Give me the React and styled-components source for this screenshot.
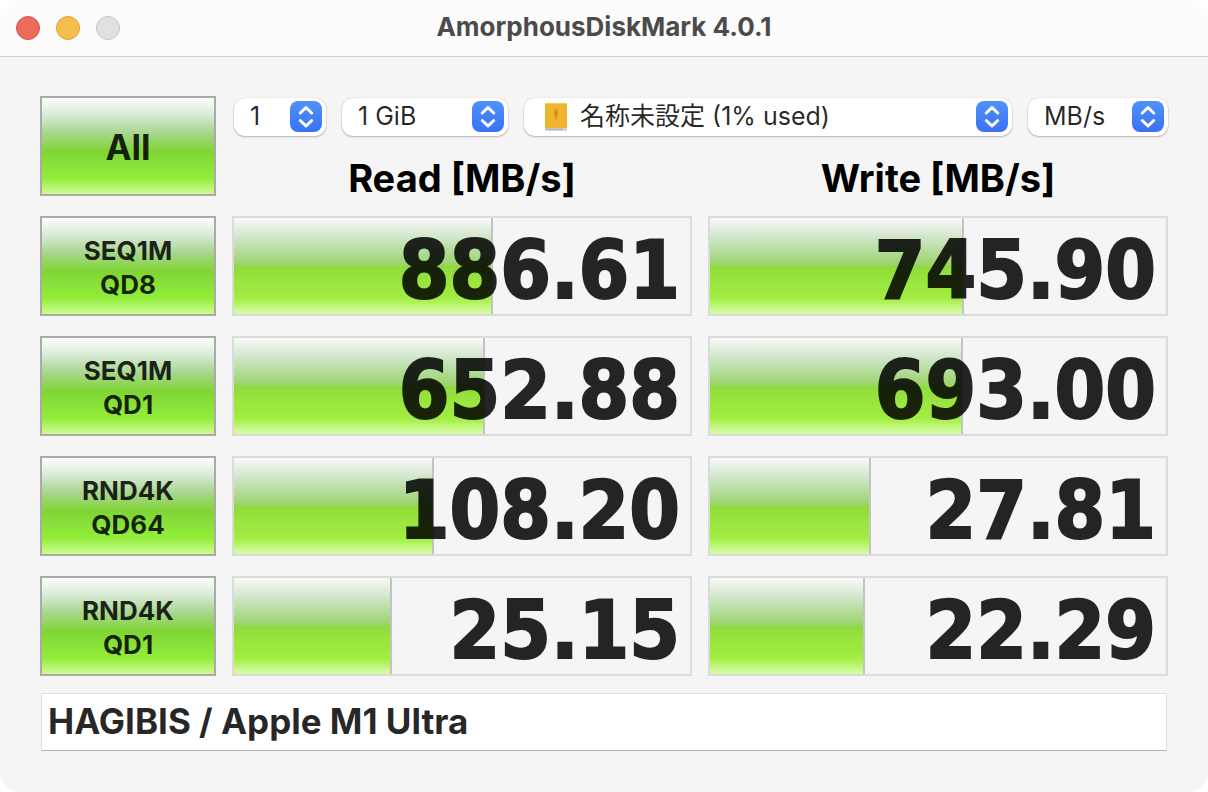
import React from "react";
import styled, { createGlobalStyle } from "styled-components";

const GlobalStyle = createGlobalStyle`
  *, *::before, *::after { box-sizing: border-box; }
  body {
    margin: 0;
    background: #ffffff;
    color: rgba(0, 0, 0, 0.85);
    font-family: Inter, "Noto Sans CJK JP", sans-serif;
  }
  button, input, select { font: inherit; color: inherit; }
`;

const Window = styled.main`
  min-height: 100vh;
  background: #f5f5f5;
  border-radius: 20px;
  overflow: hidden;
`;

const TitleBar = styled.header`
  display: grid;
  grid-template-columns: 1fr auto 1fr;
  align-items: center;
  height: 57px;
  padding: 0 16px;
  background: #fcfcfc;
  border-bottom: 1px solid #cdcdcd;
`;

const WindowControls = styled.div`
  display: flex;
  gap: 16px;
`;

const WindowButton = styled.button`
  width: 24px;
  height: 24px;
  padding: 0;
  border: 1px solid ${(p) => p.$edge};
  border-radius: 50%;
  background: ${(p) => p.$fill};
`;

const Title = styled.h1`
  margin: 0;
  padding-bottom: 2px;
  font-size: 26px;
  line-height: 32px;
  font-weight: 700;
  color: #4b4b4b;
`;

const Content = styled.div`
  padding: 39px 40px 40px;
`;

const Results = styled.table`
  width: 100%;
  table-layout: fixed;
  border-spacing: 0;

  td, th { padding: 0; }
`;

const TestColumn = styled.col`
  width: 176px;
`;

const ToolbarCell = styled.td`
  && { padding: 2px 0 0 18px; }
  height: 44px;
  vertical-align: top;
`;

const Toolbar = styled.div`
  display: flex;
  gap: 16px;
`;

const HeadCell = styled.th`
  && { padding: 20px 0 0 16px; }
  height: 56px;
  vertical-align: top;
  font-size: 38px;
  line-height: 36px;
  font-weight: 700;
  color: #000000;
`;

const TestCell = styled.th`
  && { padding-top: 20px; }
`;

const ResultCell = styled.td`
  && { padding: 20px 0 0 16px; }
`;

const TestButton = styled.button`
  display: block;
  width: 100%;
  height: 100px;
  padding: ${(p) => (p.$large ? "2px" : "4px")} 0 0;
  border: 2px solid #a9aba9;
  border-radius: 0;
  background: linear-gradient(
    #fcfefc 0%, #dcecd9 16%, #a9d690 36%, #7fd533 56%, #8ce63a 74%, #94ee3c 84%, #cdfb96 100%
  );
  font-size: ${(p) => (p.$large ? "35px" : "26px")};
  line-height: 34px;
  font-weight: 700;
  white-space: pre-line;
`;

const Gauge = styled.div`
  display: grid;
  height: 100px;
  border: 2px solid #dadcda;

  > * { grid-area: 1 / 1; }
`;

const GaugeFill = styled.div`
  border-right: 2px solid #c2c4c2;
  background: linear-gradient(
    #f9f9f9 0%, #d5e8cf 18%, #b5dc9c 34%, #9bd368 49%, #8fdb3b 51%, #9be63f 68%, #a2ee42 84%, #d9fdae 100%
  );
`;

const GaugeValue = styled.output`
  justify-self: end;
  align-self: center;
  padding: 8px 10px 0 0;
  font-family: "DejaVu Sans Condensed", "DejaVu Sans", sans-serif;
  font-size: 81px;
  line-height: 88px;
  font-weight: 700;
  color: #000000;
  -webkit-text-stroke: 2px #000000;
  opacity: 0.85;
`;

const Picker = styled.label`
  position: relative;
  display: flex;
  align-items: center;
  height: 38px;
  flex: ${(p) => (p.$width ? `0 0 ${p.$width}` : "1 1 0")};
  min-width: 0;
`;

const PickerSelect = styled.select`
  width: 100%;
  height: 100%;
  padding: 0 44px 2px ${(p) => (p.$hasIcon ? "56px" : "16px")};
  border: 0;
  border-radius: 11px;
  background: #ffffff;
  box-shadow: 0 0 1px rgba(0, 0, 0, 0.25), 0 1px 2px rgba(0, 0, 0, 0.25);
  appearance: none;
  font-size: 25px;
  line-height: 32px;
`;

const PickerArrows = styled.svg`
  position: absolute;
  right: 4px;
  width: 32px;
  height: 32px;
  pointer-events: none;
`;

const DiskIcon = styled.svg`
  position: absolute;
  left: 20px;
  width: 24px;
  height: 28px;
  pointer-events: none;
`;

const NoteField = styled.input`
  display: block;
  width: calc(100% - 2px);
  height: 58px;
  margin: 17px 1px 0;
  padding: 0 6px 2px;
  border: 1px solid #e0e0e0;
  border-bottom-color: #b4b4b4;
  border-radius: 0;
  background: #ffffff;
  font-size: 35px;
  font-weight: 700;
`;

const tests = [
  { name: "SEQ1M\nQD8", read: ["886.61", 56.8], write: ["745.90", 55.8] },
  { name: "SEQ1M\nQD1", read: ["652.88", 55], write: ["693.00", 55.4] },
  { name: "RND4K\nQD64", read: ["108.20", 43.9], write: ["27.81", 35.3] },
  { name: "RND4K\nQD1", read: ["25.15", 34.7], write: ["22.29", 34] },
];

function Dropdown({ label, value, width, icon }) {
  return (
    <Picker $width={width}>
      {icon}
      <PickerSelect aria-label={label} defaultValue={value} $hasIcon={Boolean(icon)}>
        <option>{value}</option>
      </PickerSelect>
      <PickerArrows viewBox="0 0 32 32" aria-hidden="true">
        <defs>
          <linearGradient id="arrowFill" x1="0" y1="0" x2="0" y2="1">
            <stop offset="0" stopColor="#4f92f9" />
            <stop offset="1" stopColor="#3971f6" />
          </linearGradient>
        </defs>
        <rect width="32" height="31" rx="8" fill="url(#arrowFill)" />
        <path
          d="M10.300 12 16 6.500l5.700 5.500M10.300 19.500 16 25l5.700-5.500"
          fill="none"
          stroke="#fff"
          strokeWidth="3"
          strokeLinecap="round"
          strokeLinejoin="round"
        />
      </PickerArrows>
    </Picker>
  );
}

function Disk() {
  return (
    <DiskIcon viewBox="0 0 24 28" aria-hidden="true">
      <path d="M1 24h22l-.5 3.500h-21z" fill="#b9b4aa" />
      <path d="M1 24h22v1.500H1z" fill="#dedbd3" />
      <rect x="1" y="0" width="22" height="25" rx="1" fill="#f0b42e" />
      <rect x="1" y="0" width="22" height="1" rx=".5" fill="#f6c75a" />
      <path d="M12 5.500c2 1 2.500 3 2.200 5.500-.2 1.800-1 2.600-1.300 4.500L12 18l-.9-2.500c-.3-1.900-1.100-2.700-1.300-4.500C9.500 8.500 10 6.500 12 5.500z" fill="#dd9824" />
      <path d="M12 8v5" stroke="#bd7a1a" strokeWidth="1" />
      <circle cx="20.500" cy="26" r=".8" fill="#fff" />
    </DiskIcon>
  );
}

function Result({ label, data: [value, percent] }) {
  return (
    <ResultCell>
      <Gauge>
        <GaugeFill style={{ width: `${percent}%` }} />
        <GaugeValue aria-label={label}>{value}</GaugeValue>
      </Gauge>
    </ResultCell>
  );
}

export default function App() {
  return (
    <>
      <GlobalStyle />
      <Window>
        <TitleBar>
          <WindowControls>
            <WindowButton aria-label="Close" $fill="#eb6b5e" $edge="#d35548" />
            <WindowButton aria-label="Minimize" $fill="#f4be4b" $edge="#d8a23c" />
            <WindowButton aria-label="Zoom" $fill="#e1e1e1" $edge="#c3c3c3" disabled />
          </WindowControls>
          <Title>AmorphousDiskMark 4.0.1</Title>
        </TitleBar>
        <Content>
          <Results>
            <colgroup>
              <TestColumn />
              <col />
              <col />
            </colgroup>
            <thead>
              <tr>
                <td rowSpan={2}>
                  <TestButton $large>All</TestButton>
                </td>
                <ToolbarCell colSpan={2}>
                  <Toolbar>
                    <Dropdown label="Test count" value="1" width="92px" />
                    <Dropdown label="Test size" value="1 GiB" width="166px" />
                    <Dropdown label="Target disk" value="名称未設定 (1% used)" icon={<Disk />} />
                    <Dropdown label="Unit" value="MB/s" width="140px" />
                  </Toolbar>
                </ToolbarCell>
              </tr>
              <tr>
                <HeadCell scope="col">Read [MB/s]</HeadCell>
                <HeadCell scope="col">Write [MB/s]</HeadCell>
              </tr>
            </thead>
            <tbody>
              {tests.map((test) => (
                <tr key={test.name}>
                  <TestCell scope="row">
                    <TestButton>{test.name}</TestButton>
                  </TestCell>
                  <Result label={`${test.name} read`} data={test.read} />
                  <Result label={`${test.name} write`} data={test.write} />
                </tr>
              ))}
            </tbody>
          </Results>
          <NoteField aria-label="Note" defaultValue="HAGIBIS / Apple M1 Ultra" />
        </Content>
      </Window>
    </>
  );
}
